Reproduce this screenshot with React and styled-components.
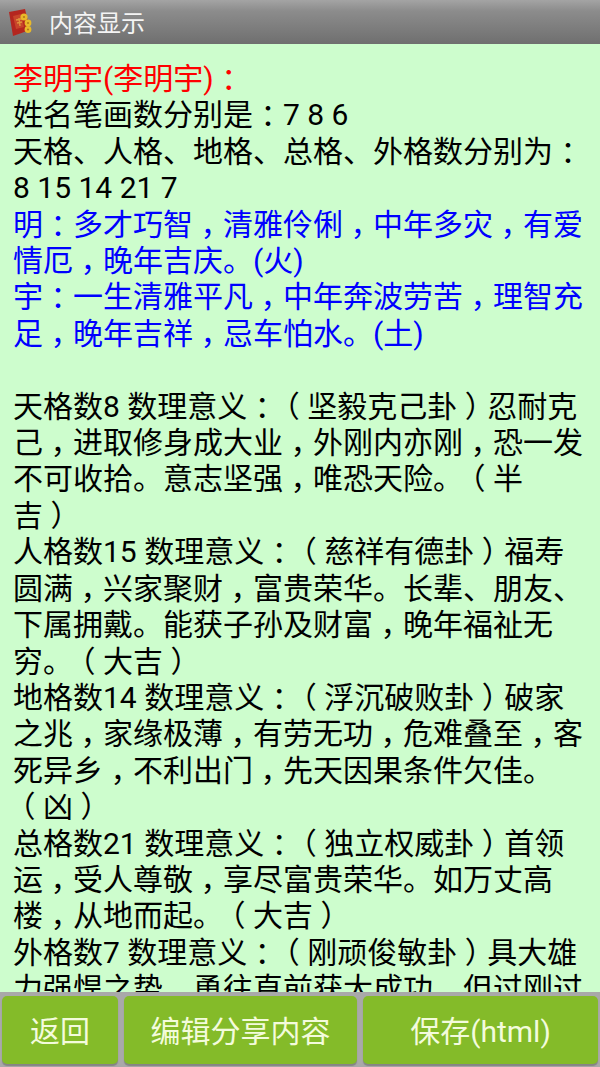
import React from "react";
import styled, { createGlobalStyle } from "styled-components";

const Global = createGlobalStyle`
  html, body { margin: 0; padding: 0; background: #cdfdcd; }
  #root { width: 600px; height: 1067px; }
`;
const Screen = styled.div`
  width: 600px; height: 1067px; display: flex; flex-direction: column; overflow: hidden;
  font-family: Roboto, "Noto Sans CJK SC", "Noto Sans CJK TC", sans-serif;
  text-spacing-trim: space-all;
`;
const TitleBar = styled.header`
  height: 44px; flex: none; display: flex; align-items: center; padding-left: 7px; gap: 10px;
  background: linear-gradient(#a4a4a4, #8c8c8c 25%, #6f6f6f);
  color: #f4f4f4; font-size: 24px;
`;
const Title = styled.h1`font: inherit; margin: 0 0 2px;`;
const Content = styled.main`
  flex: 1; min-height: 0; overflow: hidden; padding: 17px 0 0 13px;
  background: #cdfdcd;
`;
const Line = styled.div`
  height: 36.42px; line-height: 36.42px; font-size: 30px; white-space: pre;
  color: ${p => p.$color};
`;
/* Half-width punctuation glyph padded back to a full cell, so it sits centred as on the reference's font */
const Punct = styled.span`
  font-feature-settings: "halt";
  padding: 0 ${p => p.$right}em 0 ${p => p.$left}em;
`;
const Footer = styled.footer`
  height: 75px; flex: none; display: flex; gap: 6px; padding: 4px 2px 3px; box-sizing: border-box;
  background: #a9a9a9;
`;
const Btn = styled.button`
  flex: ${p => p.$w}px 0 0; width: ${p => p.$w}px; border: 0; border-radius: 5px; padding: 0 0 3px;
  background: #84bb29; color: #f3fbdc; font: inherit; font-size: 30px;
  box-shadow: 0 2px 1px #66666688;
`;

const PAD = { "，": [0.25, 0.25], "：": [0.25, 0.25], "（": [0.25, 0.25], "）": [0.25, 0.25] };
const Text = ({ children }) =>
  children.split(/([，：（）])/).map((part, i) =>
    PAD[part] ? <Punct key={i} $left={PAD[part][0]} $right={PAD[part][1]}>{part}</Punct> : part
  );

const R = "#ff0000", K = "#000000", B = "#0000ff";
const lines = [
  [R, "李明宇(李明宇)："],
  [K, "姓名笔画数分别是：7 8 6"],
  [K, "天格、人格、地格、总格、外格数分别为："],
  [K, "8 15 14 21 7"],
  [B, "明：多才巧智，清雅伶俐，中年多灾，有爱"],
  [B, "情厄，晚年吉庆。(火)"],
  [B, "宇：一生清雅平凡，中年奔波劳苦，理智充"],
  [B, "足，晚年吉祥，忌车怕水。(土)"],
  [K, " "],
  [K, "天格数8 数理意义：（坚毅克己卦）忍耐克"],
  [K, "己，进取修身成大业，外刚内亦刚，恐一发"],
  [K, "不可收拾。意志坚强，唯恐天险。（半"],
  [K, "吉）"],
  [K, "人格数15 数理意义：（慈祥有德卦）福寿"],
  [K, "圆满，兴家聚财，富贵荣华。长辈、朋友、"],
  [K, "下属拥戴。能获子孙及财富，晚年福祉无"],
  [K, "穷。（大吉）"],
  [K, "地格数14 数理意义：（浮沉破败卦）破家"],
  [K, "之兆，家缘极薄，有劳无功，危难叠至，客"],
  [K, "死异乡，不利出门，先天因果条件欠佳。"],
  [K, "（凶）"],
  [K, "总格数21 数理意义：（独立权威卦）首领"],
  [K, "运，受人尊敬，享尽富贵荣华。如万丈高"],
  [K, "楼，从地而起。（大吉）"],
  [K, "外格数7 数理意义：（刚顽俊敏卦）具大雄"],
  [K, "力强悍之势，勇往直前获大成功，但过刚过"],
];

const Logo = () => (
  <svg width="32" height="44" viewBox="0 0 32 44">
    <g transform="translate(-7 0)">
      <path d="M9 12 L25 9 L30 30 L13 36 Z" fill="#b4261f" />
      <path d="M13 16 L21 14 L24 27 L16 29 Z" fill="#c8452a" />
      <path d="M16 20 L21 19 M17 23 L22 22 M19 18 L20 26" stroke="#e0923a" strokeWidth="1.4" />
      <circle cx="24" cy="17" r="3.6" fill="#e9b92a" />
      <circle cx="28" cy="23" r="3.4" fill="#e9b92a" />
      <circle cx="28" cy="29.5" r="3.4" fill="#e9b92a" />
      <circle cx="24" cy="17" r="1.1" fill="#b5781c" />
      <circle cx="28" cy="23" r="1.1" fill="#b5781c" />
      <circle cx="28" cy="29.5" r="1.1" fill="#b5781c" />
    </g>
  </svg>
);

export default function App() {
  return (
    <Screen>
      <Global />
      <TitleBar><Logo /><Title>内容显示</Title></TitleBar>
      <Content>
        {lines.map(([c, t], i) => <Line key={i} $color={c}><Text>{t}</Text></Line>)}
      </Content>
      <Footer>
        <Btn $w={116}>返回</Btn>
        <Btn $w={233}>编辑分享内容</Btn>
        <Btn $w={235}>保存(html)</Btn>
      </Footer>
    </Screen>
  );
}
